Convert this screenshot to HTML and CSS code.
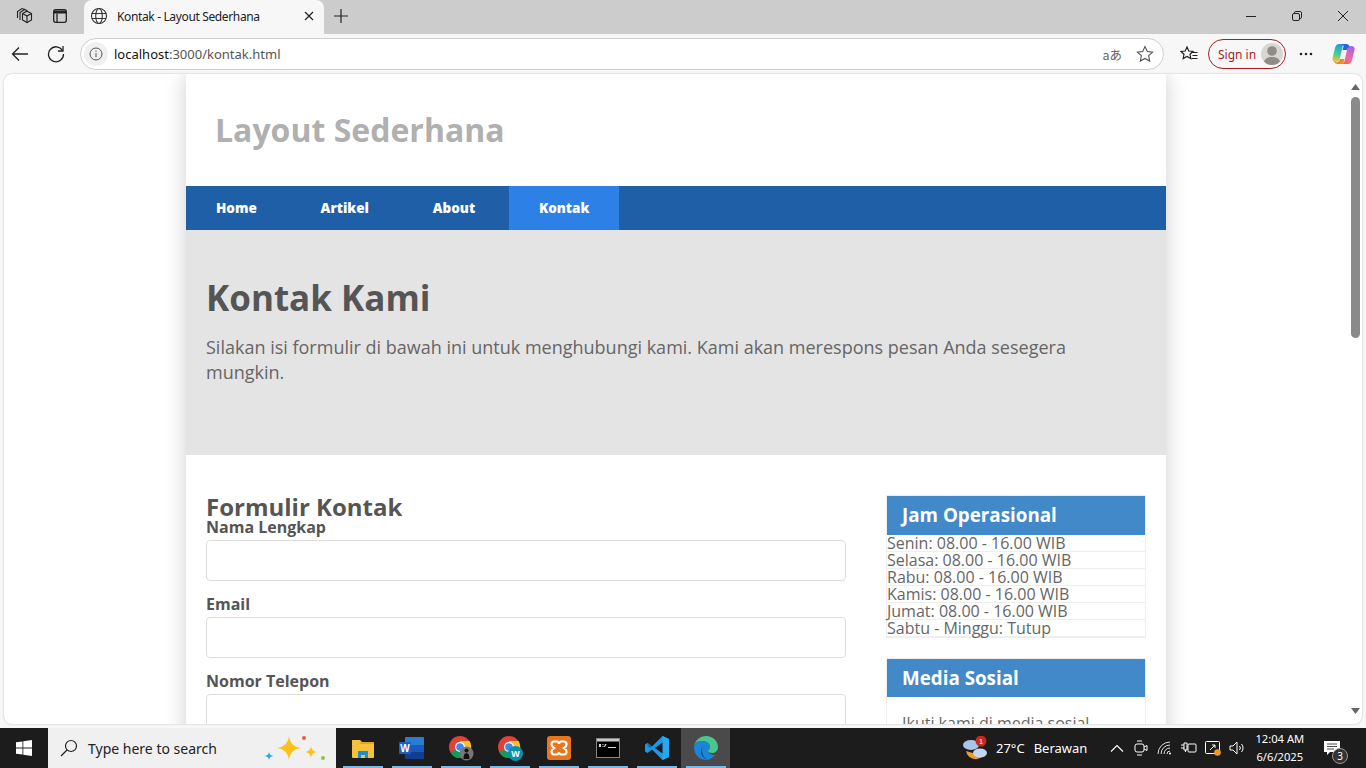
FILE: index.html
```html
<!DOCTYPE html>
<html lang="en">
  <head>
    <meta charset="UTF-8" />
    <meta name="viewport" content="width=device-width, initial-scale=1.0" />
    <title>Kontak - Layout Sederhana</title>
    <link rel="stylesheet" href="styles.css">
  </head>
  <body>
    <div class="tabstrip">
      <div class="strip-btn">
        <svg width="18" height="18" viewBox="0 0 18 18" fill="none" stroke="#222" stroke-width="1.100"><path d="M7.500 6.500l4.500-2.300 4.500 2.300v6.500l-4.500 2.500-4.500-2.500z"/><path d="M12 9v6.500M7.500 6.500L12 9l4.500-2.500"/><path d="M5 13V5.500l4.500-3 3 1.500"/><path d="M2.500 11V4.500l4.500-3 3 1"/></svg>
      </div>
      <div class="strip-btn">
        <svg width="16" height="16" viewBox="0 0 16 16" fill="none" stroke="#222" stroke-width="1.300"><rect x="1.700" y="1.700" width="12.600" height="12.600" rx="2"/><path d="M5 5.500v8.800"/><path d="M2 2.500h12v3H2z" fill="#222" stroke="none"/></svg>
      </div>
      <div class="tab">
        <svg width="18" height="18" viewBox="0 0 18 18" fill="none" stroke="#333" stroke-width="1.100"><circle cx="9" cy="9" r="7.500"/><ellipse cx="9" cy="9" rx="3.300" ry="7.500"/><path d="M2 6.500h14M2 11.500h14"/></svg>
        <span class="tab-title">Kontak - Layout Sederhana</span>
        <svg width="10" height="10" viewBox="0 0 10 10" stroke="#222" stroke-width="1.200"><path d="M1 1l8 8M9 1l-8 8"/></svg>
      </div>
      <div class="new-tab">
        <svg width="14" height="14" viewBox="0 0 14 14" stroke="#222" stroke-width="1.200"><path d="M7 0v14M0 7h14"/></svg>
      </div>
      <div class="win-controls">
        <div class="win-btn"><svg width="10" height="10" viewBox="0 0 10 10" stroke="#222"><path d="M0 5.500h10"/></svg></div>
        <div class="win-btn"><svg width="10" height="10" viewBox="0 0 10 10" fill="none" stroke="#222"><rect x="0.500" y="2.500" width="7" height="7" rx="1.500"/><path d="M2.500 2.500V1.800A1.300 1.300 0 0 1 3.800.5h4.400a1.300 1.300 0 0 1 1.300 1.300v4.400a1.300 1.300 0 0 1-1.300 1.300h-.7"/></svg></div>
        <div class="win-btn"><svg width="10" height="10" viewBox="0 0 10 10" stroke="#222"><path d="M0 0l10 10M10 0L0 10"/></svg></div>
      </div>
    </div>

    <div class="toolbar">
      <div class="tool-btn">
        <svg width="18" height="16" viewBox="0 0 18 16" fill="none" stroke="#222" stroke-width="1.300"><path d="M17 8H1.500M8 1.500L1.500 8 8 14.500"/></svg>
      </div>
      <div class="tool-btn">
        <svg width="18" height="18" viewBox="0 0 18 18" fill="none" stroke="#222" stroke-width="1.300"><path d="M15.500 5.500A7.500 7.500 0 1 0 16.500 9"/><path d="M16 1v5h-5"/></svg>
      </div>
      <div class="address">
        <div class="info-icon">
          <svg width="14" height="14" viewBox="0 0 14 14" fill="none" stroke="#555"><circle cx="7" cy="7" r="6"/><path d="M7 6v4.200M7 3.800v1.200"/></svg>
        </div>
        <span class="url"><span class="url-host">localhost</span>:3000/kontak.html</span>
        <span class="translate">aあ</span>
        <svg width="18" height="18" viewBox="0 0 18 18" fill="none" stroke="#555" stroke-width="1.100"><path d="M9 1.500l2.300 5 5.300.6-4 3.600 1.100 5.400L9 13.400l-4.700 2.700 1.100-5.400-4-3.600 5.300-.6z"/></svg>
      </div>
      <div class="fav-btn">
        <svg width="18" height="16" viewBox="0 0 18 16" fill="none" stroke="#222" stroke-width="1.200"><path d="M7 1l1.800 4 4.200.5-3 2.800.8 4.200L7 10.400l-3.800 2.100.8-4.200-3-2.800L5.200 5z"/><path d="M11.500 6.500h6M12.500 9.500h5M11.500 12.500h6"/></svg>
      </div>
      <div class="signin">
        <span>Sign in</span>
        <span class="avatar">
          <svg width="22" height="22" viewBox="0 0 22 22" fill="#8f8c88"><circle cx="11" cy="8" r="4.800"/><path d="M2.500 20c1-4.500 4.500-6 8.500-6s7.500 1.500 8.500 6a11 11 0 0 1-17 0z"/></svg>
        </span>
      </div>
      <div class="more-btn">
        <svg width="14" height="4" viewBox="0 0 14 4" fill="#222"><circle cx="2" cy="2" r="1.300"/><circle cx="7" cy="2" r="1.300"/><circle cx="12" cy="2" r="1.300"/></svg>
      </div>
      <div class="copilot">
        <svg width="23" height="22" viewBox="0 0 23 22">
          <defs>
            <linearGradient id="copLeft" x1="0.500" y1="0" x2="0.300" y2="1">
              <stop offset="0" stop-color="#1f9ce8"/>
              <stop offset="0.550" stop-color="#3fcf8e"/>
              <stop offset="1" stop-color="#f7c62f"/>
            </linearGradient>
            <linearGradient id="copRight" x1="0.800" y1="0" x2="0.200" y2="1">
              <stop offset="0" stop-color="#a860e8"/>
              <stop offset="0.600" stop-color="#ee6ca8"/>
              <stop offset="1" stop-color="#f2683c"/>
            </linearGradient>
          </defs>
          <path d="M7 1h7c-2 0-3 1-3.500 3L8 15c-.6 2.500-2 4-4.500 4C1.500 19 0 17.500 .5 15L3 5c.6-2.500 2-4 4-4z" fill="url(#copLeft)"/>
          <path d="M16 21H9c2 0 3-1 3.500-3L15 7c.6-2.500 2-4 4.500-4 2 0 3.500 1.500 3 4L20 17c-.6 2.500-2 4-4 4z" fill="url(#copRight)"/>
          <path d="M8 1h6c2 0 3.500 1 3.800 3.500C16.500 4 16 5 15 7l-4.500 0 1-3.500C12 2 10 1 8 1z" fill="#2a62e0"/>
          <path d="M6 21c-2 0-4-1-4-3 1 1 2 1.500 3.500 1 1.500-.5 2-1.500 2.500-3l4.500 0-1 3.500C12 21 11 21 9 21z" fill="#f08a2a"/>
        </svg>
      </div>
    </div>

    <div class="frame">
      <div class="viewport">
        <div class="page">
          <div class="wrapper">
            <header class="site-header">
              <div class="site-title">Layout Sederhana</div>
            </header>
            <nav class="site-nav">
              <a href="#">Home</a>
              <a href="#">Artikel</a>
              <a href="#">About</a>
              <a href="#" class="active">Kontak</a>
            </nav>
            <section class="hero">
              <h1>Kontak Kami</h1>
              <p>Silakan isi formulir di bawah ini untuk menghubungi kami. Kami akan merespons pesan Anda sesegera mungkin.</p>
            </section>
            <div class="content">
              <main class="main-col">
                <h2>Formulir Kontak</h2>
                <form>
                  <div class="form-group">
                    <label for="nama">Nama Lengkap</label>
                    <input id="nama" type="text">
                  </div>
                  <div class="form-group">
                    <label for="email">Email</label>
                    <input id="email" type="text">
                  </div>
                  <div class="form-group">
                    <label for="telepon">Nomor Telepon</label>
                    <input id="telepon" type="text">
                  </div>
                </form>
              </main>
              <aside class="side-col">
                <div class="widget">
                  <h3>Jam Operasional</h3>
                  <ul>
                    <li>Senin: 08.00 - 16.00 WIB</li>
                    <li>Selasa: 08.00 - 16.00 WIB</li>
                    <li>Rabu: 08.00 - 16.00 WIB</li>
                    <li>Kamis: 08.00 - 16.00 WIB</li>
                    <li>Jumat: 08.00 - 16.00 WIB</li>
                    <li>Sabtu - Minggu: Tutup</li>
                  </ul>
                </div>
                <div class="widget">
                  <h3>Media Sosial</h3>
                  <p class="widget-text">Ikuti kami di media sosial</p>
                </div>
              </aside>
            </div>
          </div>
        </div>
        <div class="scrollbar">
          <svg width="9" height="6" viewBox="0 0 9 6" fill="#666"><path d="M4.500 0L9 6H0z"/></svg>
          <div class="thumb"></div>
          <svg class="scroll-down" width="9" height="6" viewBox="0 0 9 6" fill="#666"><path d="M0 0h9L4.500 6z"/></svg>
        </div>
      </div>
    </div>

    <div class="taskbar">
      <div class="start">
        <svg width="16" height="16" viewBox="0 0 16 16" fill="#fff"><path d="M0 2.300l6.500-.9v6.200H0zM7.300 1.300L16 0v7.600H7.300zM0 8.400h6.500v6.200L0 13.700zM7.300 8.400H16V16l-8.700-1.200z"/></svg>
      </div>
      <div class="search">
        <svg width="18" height="18" viewBox="0 0 18 18" fill="none" stroke="#222" stroke-width="1.200"><circle cx="11" cy="7" r="5.500"/><path d="M7 11l-6 6"/></svg>
        <span class="search-text">Type here to search</span>
        <svg class="search-art" width="64" height="28" viewBox="0 0 64 28">
          <path d="M27 2c1 7 4.500 11 12 12-7.500 1-11 5-12 12-1-7-4.500-11-12-12 7.500-1 11-5 12-12z" fill="#fcc21b"/>
          <path d="M49 12c.5 3.500 2 5.300 6 6-4 .7-5.500 2.500-6 6-.5-3.500-2-5.300-6-6 4-.7 5.500-2.500 6-6z" fill="#fcc21b"/>
          <path d="M7 18c.3 2.300 1.500 3.500 4.500 4-3 .5-4.200 1.700-4.500 4-.3-2.300-1.500-3.500-4.500-4 3-.5 4.200-1.700 4.500-4z" fill="#2ea6ea"/>
          <circle cx="42" cy="4" r="2" fill="#e9622c"/>
          <circle cx="61" cy="24" r="2" fill="#8cc63f"/>
        </svg>
      </div>
      <div class="task-icons">
        <div class="task-icon running">
          <svg width="24" height="22" viewBox="0 0 24 22"><path d="M1 3h8l2 2h12v15a1 1 0 0 1-1 1H2a1 1 0 0 1-1-1z" fill="#f5c33b"/><path d="M1 7h22V5H10L8 7z" fill="#e4a521"/><path d="M7 14h10v7h-3v-3h-4v3H7z" fill="#1a8fd8"/></svg>
        </div>
        <div class="task-icon running">
          <svg width="26" height="24" viewBox="0 0 26 24"><rect x="6" y="1" width="19" height="22" rx="1" fill="#2b7cd3"/><path d="M6 16h19v6a1 1 0 0 1-1 1H6z" fill="#103f91"/><path d="M6 9h19v7H6z" fill="#185abd"/><rect x="0" y="6" width="12" height="12" rx="1" fill="#1a5fc0"/><text class="word-w" x="6" y="15.500">W</text></svg>
        </div>
        <div class="task-icon running">
          <svg width="26" height="26" viewBox="0 0 26 26">
            <circle cx="12" cy="12" r="11" fill="#db4437"/><path d="M12 12L2.500 17.500A11 11 0 0 0 14 22.800z" fill="#0f9d58"/><path d="M12 6h9.500A11 11 0 0 1 14 22.800L12 12z" fill="#fbc02d"/><circle cx="12" cy="12" r="5" fill="#fff"/><circle cx="12" cy="12" r="3.800" fill="#4285f4"/>
            <circle cx="18.500" cy="18.500" r="7" fill="#777"/><circle cx="18.500" cy="15.500" r="2" fill="#111"/><path d="M15.500 24c0-4 1-6 3-6s3 2 3 6z" fill="#111"/>
          </svg>
        </div>
        <div class="task-icon running">
          <svg width="26" height="26" viewBox="0 0 26 26">
            <circle cx="12" cy="12" r="11" fill="#db4437"/><path d="M12 12L2.500 17.500A11 11 0 0 0 14 22.800z" fill="#0f9d58"/><path d="M12 6h9.500A11 11 0 0 1 14 22.800L12 12z" fill="#fbc02d"/><circle cx="12" cy="12" r="5" fill="#fff"/><circle cx="12" cy="12" r="3.800" fill="#4285f4"/>
            <circle cx="18.500" cy="18.500" r="7.500" fill="#0e8fa8"/><text class="badge-w" x="18.500" y="21.500">W</text>
          </svg>
        </div>
        <div class="task-icon running">
          <svg width="24" height="24" viewBox="0 0 24 24"><rect width="24" height="24" rx="3" fill="#e8761f"/><path d="M7 5.500h3c1 0 1.500 1.500 2 1.500s1-1.500 2-1.500h3c2 0 2.500 2 2.500 3s-1 2.500-2.500 3.500c1.500 1 2.500 2.500 2.500 3.500s-.5 3-2.500 3h-3c-1 0-1.500-1.500-2-1.500s-1 1.500-2 1.500H7c-2 0-2.500-2-2.500-3s1-2.500 2.500-3.500C5.500 11 4.500 9.500 4.500 8.500S5 5.500 7 5.500z" fill="none" stroke="#fff" stroke-width="2.200"/></svg>
        </div>
        <div class="task-icon running">
          <svg width="24" height="20" viewBox="0 0 24 20"><rect x="0.500" y="0.500" width="23" height="19" fill="#000" stroke="#888"/><rect x="1" y="1" width="22" height="2.500" fill="#c8c8c8"/><path d="M3 6h2v3H3zM6.500 6h1v1h-1zM6.500 8h1v1h-1zM9 6h1.500L9 9H8zM12 9h8v1h-8z" fill="#ddd"/></svg>
        </div>
        <div class="task-icon running">
          <svg width="24" height="24" viewBox="0 0 24 24"><path d="M17.500 0L24 3v18l-6.500 3L7 13.500 2.500 17 0 15.500V8.500L2.500 7 7 10.500z" fill="#1a9ae6"/><path d="M17.500 0L24 3v18l-6.500 3z" fill="#2aa7ef"/><path d="M17.500 6.500L10 12l7.500 5.500z" fill="#1c1c1c"/><path d="M2.500 7L7 10.500 5 12l-2.500-2z" fill="#0f6fb5"/></svg>
        </div>
        <div class="task-icon running current">
          <svg width="24" height="24" viewBox="0 0 24 24">
            <path d="M12 0c7 0 12 5 12 11 0 4-3 6-6 6-2 0-4-1-4-2 0-1 2-1.500 2-4 0-3-3-6-8-6S1 7 0 11C1 4 6 0 12 0z" fill="#4cc68c"/>
            <path d="M0 11c1-4 4-6 8-6 5 0 8 3 8 6 0 2.500-2 3-2 4 0 2 3 4 7 4-2.500 3-6 5-9 5C5 24 0 18 0 11z" fill="#1a86d8"/>
            <path d="M8 14c0-3 2-4 4-4-3 0-5 2-5 6 0 4 3 7 7 8-3-1-6-5-6-10z" fill="#0c4d92"/>
          </svg>
        </div>
      </div>
      <div class="tray">
        <div class="weather">
          <svg width="24" height="24" viewBox="0 0 24 24">
            <path d="M3 15a10 10 0 0 0 17 5z" fill="#f09a2c"/>
            <ellipse cx="8" cy="9" rx="8" ry="5" fill="#a9c6e6"/>
            <ellipse cx="17" cy="17" rx="7" ry="4.500" fill="#c3d8ee"/>
            <circle cx="18" cy="5" r="5.500" fill="#c42b1c"/>
            <text class="weather-badge" x="18" y="8">1</text>
          </svg>
        </div>
        <span class="weather-temp">27°C</span>
        <span class="weather-text">Berawan</span>
        <div class="tray-slots">
          <div class="tray-slot"><svg width="14" height="8" viewBox="0 0 14 8" fill="none" stroke="#fff" stroke-width="1.100"><path d="M1 7.500l6-6 6 6"/></svg></div>
          <div class="tray-slot"><svg width="14" height="16" viewBox="0 0 14 16" fill="none" stroke="#fff"><rect x="1" y="4" width="9" height="8" rx="2"/><path d="M10 7l3-1.500v5L10 9M3 1h5M3 15h5"/></svg></div>
          <div class="tray-slot"><svg width="16" height="14" viewBox="0 0 16 14" fill="none" stroke="#ddd"><path d="M1 13A12 12 0 0 1 13 1M4 13a9 9 0 0 1 9-9M7 13a6 6 0 0 1 6-6M10 13a3 3 0 0 1 3-3"/><circle cx="13" cy="12.500" r="1" fill="#fff" stroke="none"/></svg></div>
          <div class="tray-slot"><svg width="16" height="12" viewBox="0 0 16 12" fill="none" stroke="#fff"><path d="M0 3h3M0 6h3M3 1v7h3V1zM4.500 8v2"/><rect x="7" y="2" width="8" height="8" rx="1"/></svg></div>
          <div class="tray-slot"><svg width="16" height="16" viewBox="0 0 16 16"><rect x="0.500" y="1.500" width="14" height="12" rx="1" fill="none" stroke="#fff"/><path d="M5 10l5-5M7 5h3v3" fill="none" stroke="#fff"/><circle cx="12.500" cy="12.500" r="3.300" fill="#f7941d"/></svg></div>
          <div class="tray-slot"><svg width="16" height="14" viewBox="0 0 16 14" fill="none" stroke="#fff"><path d="M1 5h3l4-4v12l-4-4H1zM10.500 5a3 3 0 0 1 0 4M12.500 3a6 6 0 0 1 0 8"/></svg></div>
        </div>
        <div class="clock">
          <span>12:04 AM</span>
          <span>6/6/2025</span>
        </div>
        <div class="notif">
          <svg width="16" height="15" viewBox="0 0 16 15" fill="#fff"><path d="M0 0h16v11H6l-3 3v-3H0z"/><path d="M3 3h10M3 5.500h10M3 8h7" stroke="#1c1c1c" stroke-width="0.800"/></svg>
          <span class="notif-count">3</span>
        </div>
      </div>
    </div>
  </body>
</html>
```

FILE: styles.css
```css
/* Browser-Rahmen */
html, body {
    margin: 0;
    padding: 0;
    height: 100%;
    overflow: hidden;
}

body {
    display: flex;
    flex-direction: column;
    height: 768px;
    font-family: "Open Sans", sans-serif;
    color: #555;
    background: #f7f7f7;
}

.tabstrip {
    display: flex;
    align-items: flex-end;
    flex: 0 0 34px;
    height: 34px;
    padding-left: 6px;
    background: #cccccc;
}

.strip-btn {
    display: flex;
    align-items: center;
    justify-content: center;
    width: 36px;
    height: 32px;
    margin-bottom: 2px;
}

.tab {
    display: flex;
    align-items: center;
    width: 240px;
    height: 34px;
    margin-left: 6px;
    padding: 0 10px 2px 6px;
    box-sizing: border-box;
    background: #f7f7f7;
    border-radius: 8px 8px 0 0;
}

.tab-title {
    flex: 1;
    margin-left: 9px;
    font-family: "Noto Sans", sans-serif;
    font-size: 12px;
    letter-spacing: -0.360px;
    color: #222;
}

.new-tab {
    display: flex;
    align-items: center;
    height: 32px;
    margin-left: 10px;
    margin-bottom: 2px;
}

.win-controls {
    display: flex;
    margin-left: auto;
}

.win-btn {
    display: flex;
    align-items: center;
    justify-content: center;
    width: 46px;
    height: 32px;
    margin-bottom: 2px;
}

.toolbar {
    display: flex;
    align-items: center;
    flex: 0 0 40px;
    height: 40px;
    padding-left: 2px;
    background: #f7f7f7;
}

.tool-btn {
    display: flex;
    align-items: center;
    justify-content: center;
    width: 36px;
    height: 36px;
}

.address {
    display: flex;
    align-items: center;
    width: 1084px;
    height: 32px;
    margin-left: 6px;
    padding-right: 9px;
    box-sizing: border-box;
    background: #fff;
    border: 1px solid #cfcfcf;
    border-radius: 16px;
}

.info-icon {
    display: flex;
    align-items: center;
    justify-content: center;
    width: 24px;
    height: 24px;
    margin-left: 3px;
    background: #f0f0f0;
    border-radius: 50%;
}

.url {
    flex: 1;
    margin-left: 6px;
    font-family: "Noto Sans", sans-serif;
    font-size: 13px;
    color: #555;
}

.url-host {
    color: #111;
}

.translate {
    margin-right: 14px;
    font-family: "Noto Sans CJK JP", sans-serif;
    font-size: 12.500px;
    color: #666;
}

.fav-btn {
    display: flex;
    justify-content: center;
    width: 44px;
    padding-left: 6px;
    box-sizing: border-box;
}

.signin {
    display: flex;
    align-items: center;
    justify-content: space-between;
    width: 78px;
    height: 30px;
    padding: 0 2px 0 9px;
    box-sizing: border-box;
    border: 1px solid #a81c22;
    border-radius: 15px;
    font-family: "Noto Sans", sans-serif;
    font-size: 12px;
    color: #a81c22;
}

.avatar {
    display: flex;
    width: 22px;
    height: 22px;
    overflow: hidden;
    background: #d8d6d3;
    border-radius: 50%;
}

.more-btn {
    display: flex;
    justify-content: center;
    width: 40px;
}

.copilot {
    display: flex;
    justify-content: center;
    width: 34px;
}

.frame {
    flex: 1;
    min-height: 0;
    padding: 0 4px 4px;
    background: #f7f7f7;
}

.viewport {
    display: flex;
    height: 100%;
    overflow: hidden;
    background: #fff;
    border-radius: 8px;
    box-shadow: 0 0 2px rgba(0, 0, 0, 0.25);
}

.page {
    flex: 1;
    min-width: 0;
    overflow: hidden;
}

.scrollbar {
    display: flex;
    flex-direction: column;
    align-items: center;
    flex: 0 0 14px;
    padding-top: 10px;
    box-sizing: border-box;
}

.thumb {
    width: 9px;
    height: 241px;
    margin-top: 7px;
    background: #8a8a8a;
    border-radius: 5px;
}

.scroll-down {
    margin-top: auto;
    margin-bottom: 10px;
}

/* Seite */
.wrapper {
    width: 980px;
    margin: 0 auto;
    background: #fff;
    box-shadow: 0 0 20px rgba(0, 0, 0, 0.2);
}

.site-header {
    display: flex;
    align-items: center;
    height: 112px;
    padding: 0 29px 2px;
    box-sizing: border-box;
}

.site-title {
    font-size: 32px;
    font-weight: 700;
    color: #b0b0b0;
}

.site-nav {
    display: flex;
    gap: 3.800px;
    height: 44px;
    background: #1e5fa8;
}

.site-nav a {
    padding: 0 30px;
    font-size: 13.500px;
    font-weight: 800;
    line-height: 44px;
    color: #fff;
    text-decoration: none;
}

.site-nav a.active {
    background: #2c80e6;
}

.hero {
    height: 225px;
    padding: 43px 20px 0;
    box-sizing: border-box;
    background: #e4e4e4;
}

.hero h1 {
    margin: 0 0 13px;
    font-size: 35px;
    line-height: 49px;
    font-weight: 700;
}

.hero p {
    margin: 0;
    font-size: 18px;
    line-height: 25px;
    color: #666;
}

.content {
    display: flex;
    gap: 40px;
    padding: 40px 20px;
}

.main-col {
    flex: 0 0 640px;
}

.main-col h2 {
    margin: 0 0 -3px;
    font-size: 24px;
    line-height: 24px;
    font-weight: 700;
}

.form-group {
    margin-bottom: 12px;
}

.form-group label {
    display: block;
    margin-bottom: 2px;
    font-size: 16px;
    line-height: 22px;
    font-weight: 700;
}

.form-group input {
    display: block;
    width: 100%;
    height: 41px;
    box-sizing: border-box;
    border: 1px solid #ddd;
    border-radius: 4px;
    background: #fff;
}

.side-col {
    flex: 0 0 260px;
    display: flex;
    flex-direction: column;
    gap: 20px;
}

.widget {
    border: 1px solid #eee;
}

.widget h3 {
    margin: 0;
    padding: 0 15px;
    font-size: 18.800px;
    line-height: 38px;
    font-weight: 700;
    color: #fff;
    background: #4189c9;
}

.widget:first-child h3 {
    line-height: 39px;
}

.widget ul {
    margin: 0;
    padding: 0;
    list-style: none;
}

.widget li {
    font-size: 16px;
    line-height: 16px;
    color: #666;
    border-bottom: 1px solid #eee;
}

.widget-text {
    margin: 0;
    padding: 15px;
    font-size: 16px;
    color: #666;
}

/* Taskleiste */
.taskbar {
    display: flex;
    align-items: center;
    flex: 0 0 40px;
    height: 40px;
    background: #1c1c1c;
    color: #fff;
}

.start {
    display: flex;
    align-items: center;
    justify-content: center;
    width: 48px;
    height: 40px;
}

.search {
    display: flex;
    align-items: center;
    width: 288px;
    height: 40px;
    padding: 0 10px 0 12px;
    box-sizing: border-box;
    background: #f0f0f0;
}

.search-text {
    margin-left: 10px;
    font-family: "Noto Sans", sans-serif;
    font-size: 14px;
    color: #222;
}

.search-art {
    margin-left: auto;
}

.task-icons {
    display: flex;
    margin-left: 2px;
}

.task-icon {
    display: flex;
    align-items: center;
    justify-content: center;
    width: 49px;
    height: 40px;
    box-sizing: border-box;
}

.task-icon.running {
    background: linear-gradient(#76b9ed, #76b9ed) center bottom / 40px 2px no-repeat;
}

.task-icon.current {
    background-color: #4a4a4a;
}

.word-w {
    font-family: "Liberation Sans", sans-serif;
    font-size: 10px;
    font-weight: 700;
    fill: #fff;
    text-anchor: middle;
}

.badge-w {
    font-family: "Liberation Sans", sans-serif;
    font-size: 9px;
    font-weight: 700;
    fill: #fff;
    text-anchor: middle;
}

.tray {
    display: flex;
    align-items: center;
    flex: 1;
    font-family: "Noto Sans", sans-serif;
    font-size: 13px;
    padding-left: 233px;
}

.weather {
    display: flex;
}

.weather-badge {
    font-family: "Liberation Sans", sans-serif;
    font-size: 8px;
    fill: #fff;
    text-anchor: middle;
}

.weather-temp {
    margin-left: 9px;
}

.weather-text {
    margin-left: 9px;
}

.tray-slots {
    display: flex;
    margin-left: 18px;
}

.tray-slot {
    display: flex;
    align-items: center;
    justify-content: center;
    width: 24px;
    height: 40px;
}

.clock {
    display: flex;
    flex-direction: column;
    align-items: center;
    margin-left: 6px;
    font-size: 11.200px;
    line-height: 18px;
}

.notif {
    position: relative;
    display: flex;
    margin-left: 20px;
}

.notif-count {
    position: absolute;
    left: 8px;
    top: 7px;
    width: 14px;
    height: 14px;
    font-size: 10px;
    line-height: 14px;
    text-align: center;
    background: #333;
    border: 1px solid #999;
    border-radius: 50%;
}
```
